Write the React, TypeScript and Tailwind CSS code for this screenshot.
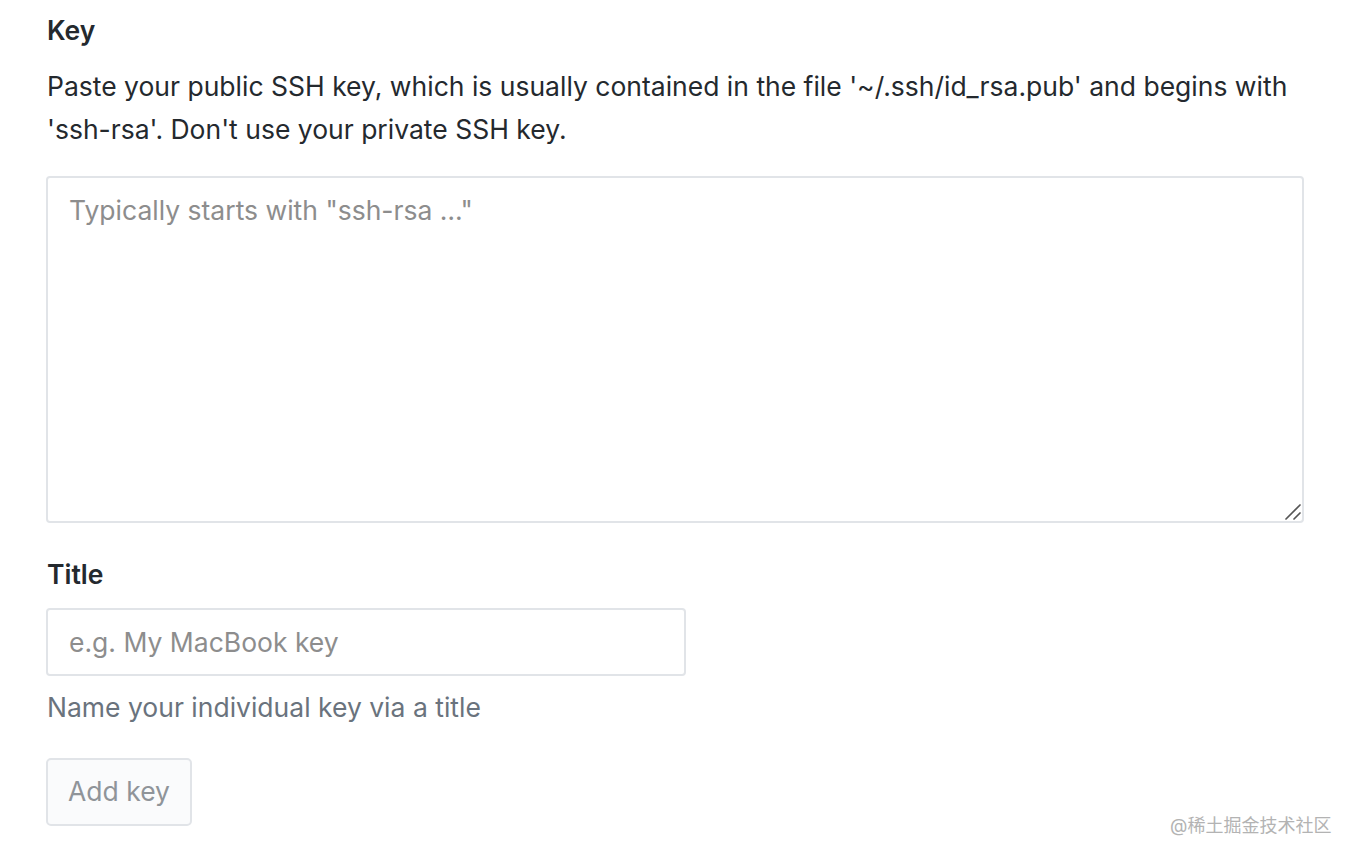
export default function App() {
  return (
    <div className="relative h-[860px] w-[1354px] bg-white text-[#24292e] [font-family:Inter,'Noto_Sans_CJK_SC',sans-serif]">
      <form className="flex flex-col pl-[47px] pr-[40px] pt-[14px]">
        <label className="text-[26.5px] font-semibold leading-[32px]">Key</label>
        <p className="mt-[19px] text-[26.5px] leading-[43px]">
          Paste your public SSH key, which is usually contained in the file '~/.ssh/id_rsa.pub' and begins with
          <br />
          'ssh-rsa'. Don't use your private SSH key.
        </p>
        <div className="relative -ml-px mt-[25px] w-[1258px]">
          <textarea
            className="block h-[347px] w-full resize-none rounded-[4px] border-2 border-[#e1e4e8] px-[21px] py-[13px] text-[26.5px] leading-[38px] outline-none placeholder:text-[#8d8d8d]"
            placeholder={'Typically starts with "ssh-rsa …"'}
          />
          <svg className="absolute bottom-[3px] right-[3px] h-[17px] w-[17px]" viewBox="0 0 17 17">
            <path d="M2 16 L16 2 M10 16 L16 10" stroke="#555" strokeWidth="1.7" strokeLinecap="round" />
          </svg>
        </div>
        <label className="mt-[35px] text-[26.5px] font-semibold leading-[32px]">Title</label>
        <input
          className="-ml-px mt-[18px] h-[68px] w-[640px] rounded-[4px] border-2 border-[#e1e4e8] px-[21px] text-[26.5px] outline-none placeholder:text-[#8d8d8d]"
          placeholder="e.g. My MacBook key"
        />
        <p className="mt-[11px] text-[26.5px] leading-[40px] text-[#6a737d]">Name your individual key via a title</p>
        <div className="mt-[31px]">
          <button
            type="button"
            className="-ml-px h-[68px] w-[146px] rounded-[5px] border-2 border-[#e1e4e8] bg-[#fafbfc] text-[26.5px] text-[#8f9499]"
          >
            Add key
          </button>
        </div>
      </form>
      <span className="absolute left-[1170px] top-[814px] text-[18px] leading-[24px] text-[#b3b3b3]">
        @稀土掘金技术社区
      </span>
    </div>
  );
}
